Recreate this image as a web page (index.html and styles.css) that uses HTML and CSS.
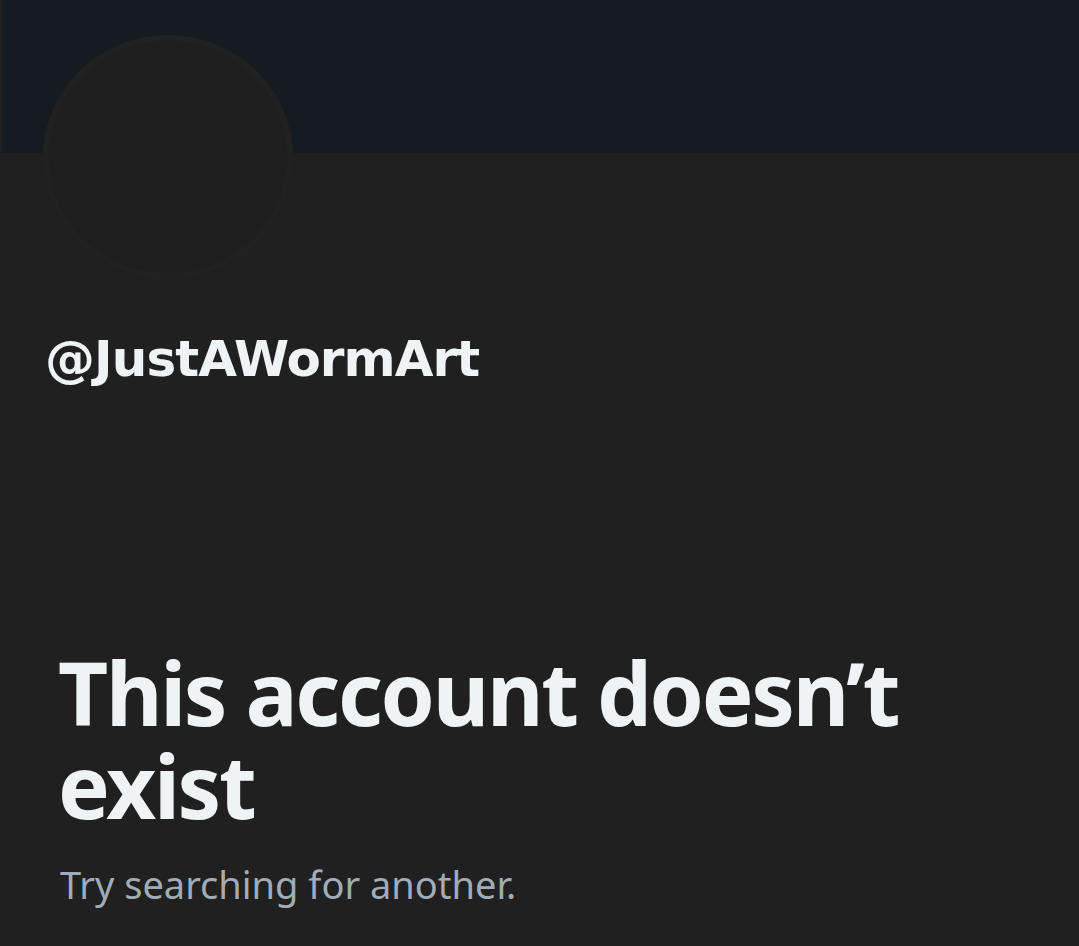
FILE: index.html
```html
<!DOCTYPE html>
<html lang="en">
<head>
<meta charset="utf-8">
<title>@JustAWormArt</title>
<link rel="stylesheet" href="styles.css">
</head>
<body>
<div class="page">
  <div class="banner"></div>
  <div class="avatar"></div>
  <div class="handle">@JustAWormArt</div>
  <div class="empty">
    <h1 class="title">This account doesn’t exist</h1>
    <p class="sub">Try searching for another.</p>
  </div>
</div>
</body>
</html>
```

FILE: styles.css
```css
html, body {
  margin: 0;
  padding: 0;
  background: #202020;
}
.page {
  width: 1079px;
  height: 946px;
  overflow: hidden;
  display: flex;
  flex-direction: column;
}
.banner {
  height: 153px;
  margin-left: 2px;
  background: #151c21;
  flex: none;
}
.avatar {
  flex: none;
  box-sizing: border-box;
  width: 250px;
  height: 244px;
  margin-top: -118px;
  margin-left: 43px;
  border-radius: 50%;
  background: #1e1f1e;
  border: 6px solid #212121;
}
.handle {
  margin: 50px 0 0 45px;
  font-family: "DejaVu Sans", sans-serif;
  font-weight: bold;
  font-size: 50px;
  letter-spacing: -0.9px;
  line-height: 60px;
  color: #eff3f4;
}
.empty {
  padding-left: 58px;
  margin-top: 257px;
}
.title {
  margin: 0;
  width: 900px;
  font-family: "Noto Sans", sans-serif;
  font-weight: bold;
  font-size: 87px;
  letter-spacing: -2.3px;
  line-height: 93px;
  color: #eff3f4;
}
.sub {
  margin: 27px 0 0 2px;
  font-family: "Noto Sans", sans-serif;
  font-size: 38px;
  letter-spacing: 0;
  line-height: 50px;
  color: #a0acb7;
}
```
